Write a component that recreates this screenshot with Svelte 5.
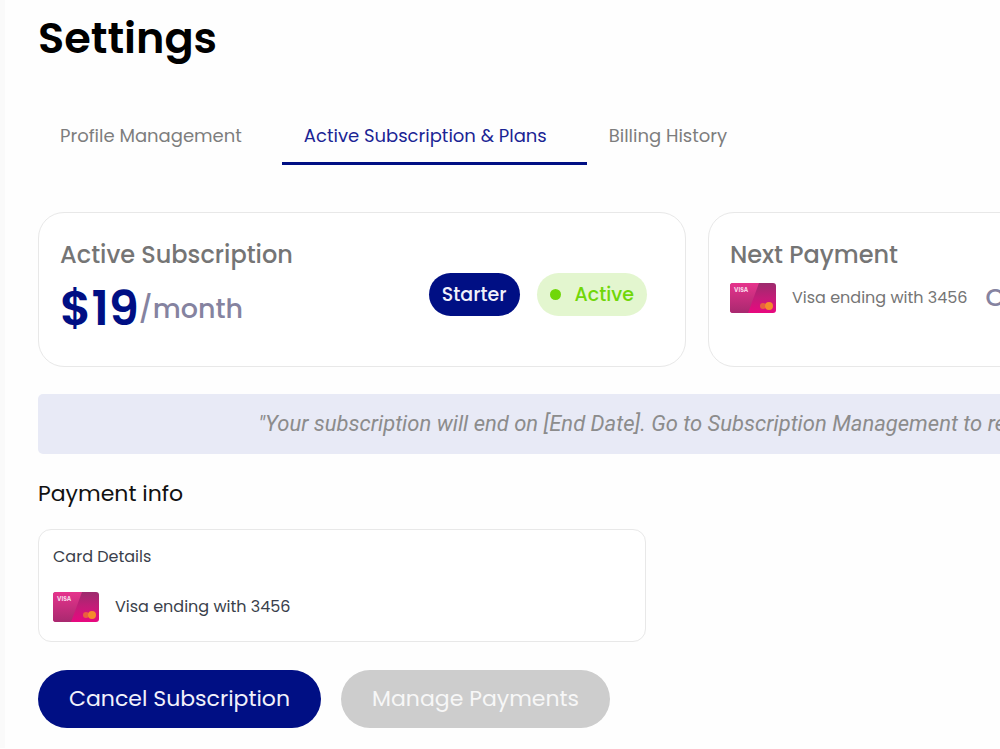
<script>
	let tabs = ['Profile Management', 'Active Subscription & Plans', 'Billing History'];
	let current = $state(1);
</script>

{#snippet bankCard(id)}
	<svg class="bank-card" viewBox="0 0 46 30" aria-hidden="true">
		<defs>
			<linearGradient id="{id}-left" x1="0" y1="0" x2="0" y2="1">
				<stop offset="0" stop-color="#e6338c" />
				<stop offset="1" stop-color="#a8296f" />
			</linearGradient>
			<linearGradient id="{id}-right" x1="0" y1="0" x2="0" y2="1">
				<stop offset="0" stop-color="#9c2b6d" />
				<stop offset="0.5" stop-color="#c41c78" />
				<stop offset="1" stop-color="#e8087f" />
			</linearGradient>
			<clipPath id="{id}-clip"><rect width="46" height="30" rx="3" /></clipPath>
		</defs>
		<g clip-path="url(#{id}-clip)">
			<rect width="46" height="30" fill="url(#{id}-right)" />
			<path d="M0 0h29L18 30H0z" fill="url(#{id}-left)" />
			<circle cx="33" cy="23" r="3" fill="#ea5f40" />
			<circle cx="39" cy="23" r="4" fill="#f58a2c" />
			<text x="4" y="9" class="brand">VISA</text>
		</g>
	</svg>
{/snippet}

<main>
	<h1>Settings</h1>

	<nav>
		{#each tabs as tab, i}
			<button class="tab" class:selected={current === i} onclick={() => (current = i)}>{tab}</button>
		{/each}
	</nav>

	<div class="cards">
		<section class="card plan">
			<div>
				<h2>Active Subscription</h2>
				<p class="price"><strong>$19</strong><span>/month</span></p>
			</div>
			<div class="badges">
				<span class="badge starter">Starter</span>
				<span class="badge active"><i class="dot"></i>Active</span>
			</div>
		</section>

		<section class="card">
			<h2>Next Payment</h2>
			<div class="method">
				{@render bankCard('next')}
				<span>Visa ending with 3456</span>
				<span class="due">On January 1, 2025</span>
			</div>
		</section>
	</div>

	<p class="notice">
		"Your subscription will end on [End Date]. Go to Subscription Management to reactivate now."
	</p>

	<h3>Payment info</h3>
	<section class="details">
		<h4>Card Details</h4>
		<div class="method">
			{@render bankCard('saved')}
			<span>Visa ending with 3456</span>
		</div>
	</section>

	<div class="actions">
		<button class="cancel">Cancel Subscription</button>
		<button class="manage" disabled>Manage Payments</button>
	</div>
</main>

<style>
	:global(body) {
		background: #fefefe;
		overflow-x: hidden;
	}

	main {
		min-width: 1318px;
		padding: 12px 33px 20px;
		border-left: 5px solid #fafafa;
		font-family: Poppins, Inter, sans-serif;
		color: #111;
	}

	h1,
	h2,
	h3,
	h4,
	p {
		margin: 0;
	}

	h1 {
		font-size: 43px;
		font-weight: 600;
		line-height: 52px;
		color: #000;
	}

	button {
		font-family: inherit;
		border: none;
		cursor: pointer;
	}

	nav {
		display: flex;
		margin-top: 44px;
	}

	.tab {
		padding: 15px 40px 13px 22px;
		background: none;
		border-bottom: 3px solid transparent;
		font-size: 18px;
		line-height: 26px;
		color: #7d7d7d;
	}

	.tab.selected {
		color: #1a2494;
		border-bottom-color: #000f84;
	}

	.cards {
		display: grid;
		grid-template-columns: 1fr 1fr;
		gap: 22px;
		margin-top: 47px;
	}

	.card {
		padding: 25px 38px 25px 21px;
		border: 1px solid #e8e8e8;
		border-radius: 26px;
		background: #fff;
	}

	.plan {
		display: flex;
		justify-content: space-between;
		align-items: center;
	}

	h2 {
		font-size: 24px;
		font-weight: 500;
		line-height: 34px;
		color: #757575;
	}

	.price {
		display: flex;
		align-items: center;
		margin-top: 5px;
		line-height: 64px;
		color: #8583a0;
		font-size: 27px;
		font-weight: 500;
	}

	.price strong {
		font-size: 48px;
		font-weight: 600;
		color: #000f84;
	}

	.badges {
		display: flex;
		gap: 17px;
		margin-top: 10px;
	}

	.badge {
		display: flex;
		align-items: center;
		padding: 0 13px;
		border-radius: 22px;
		font-size: 19px;
		font-weight: 500;
		line-height: 43px;
	}

	.starter {
		background: #000f84;
		color: #f1f1fb;
	}

	.active {
		background: #e3f6cf;
		color: #70d708;
	}

	.dot {
		width: 11px;
		height: 11px;
		margin-right: 14px;
		border-radius: 50%;
		background: #70d708;
	}

	.method {
		display: flex;
		align-items: center;
		gap: 16px;
		font-size: 16px;
		line-height: 34px;
		color: #757575;
		white-space: nowrap;
	}

	.card .method {
		margin-top: 9px;
	}

	.bank-card {
		width: 46px;
		height: 30px;
	}

	.brand {
		font-size: 6px;
		font-weight: 700;
		fill: #f8d3e6;
	}

	.due {
		padding-left: 2px;
		font-size: 25px;
		font-weight: 500;
		color: #8583a0;
	}

	.notice {
		margin-top: 27px;
		padding: 15px;
		border-radius: 5px;
		background: #e8eaf6;
		font-family: Roboto, sans-serif;
		font-size: 22px;
		font-style: italic;
		line-height: 30px;
		text-align: center;
		color: #8c8c8c;
	}

	h3 {
		margin-top: 23px;
		font-size: 22px;
		font-weight: 400;
		line-height: 34px;
	}

	.details {
		max-width: 608px;
		box-sizing: border-box;
		margin-top: 18px;
		padding: 14px 14px 17px;
		border: 1px solid #e8e8e8;
		border-radius: 13px;
		background: #fff;
	}

	h4 {
		margin-bottom: 20px;
		font-size: 16px;
		font-weight: 400;
		line-height: 26px;
		color: #3a3f4b;
	}

	.details .method {
		color: #3a3f4b;
	}

	.actions {
		display: flex;
		gap: 20px;
		margin-top: 28px;
	}

	.actions button {
		padding: 0 31px;
		border-radius: 29px;
		font-size: 22px;
		line-height: 58px;
	}

	.cancel {
		background: #000f84;
		color: #f1f1fb;
	}

	.manage {
		background: #cdcdcd;
		color: #f7f7f7;
		cursor: default;
	}
</style>
